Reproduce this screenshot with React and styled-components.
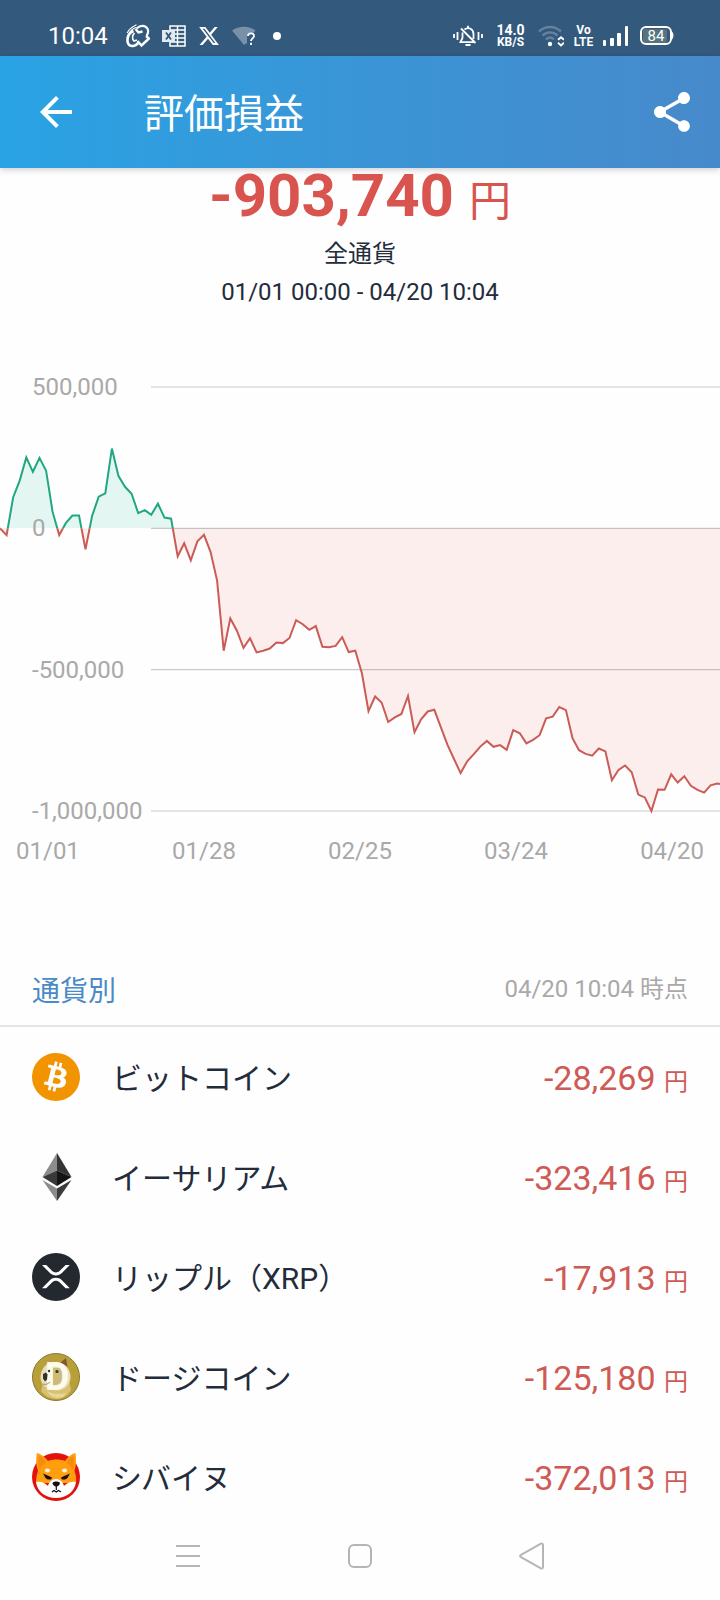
import styled, { createGlobalStyle } from "styled-components";
import { MdArrowBack, MdShare } from "react-icons/md";
import { FaXTwitter } from "react-icons/fa6";
import { SiBitcoin } from "react-icons/si";

const GlobalStyle = createGlobalStyle`
  * {
    box-sizing: border-box;
  }

  body {
    margin: 0;
    background-color: #fefefe;
    color: #232c3b;
    font-family: Roboto, "Noto Sans CJK JP", sans-serif;
  }
`;

const StatusBar = styled.div`
  display: flex;
  justify-content: space-between;
  align-items: center;
  height: 56px;
  padding: 16px 46px 0 48px;
  background-color: #33597d;
  color: #fff;
`;

const StatusGroup = styled.div`
  display: flex;
  align-items: center;
  gap: 12px;
`;

const Clock = styled.span`
  margin-right: 6px;
  font-size: 24px;
  line-height: 28px;
`;

const Stack = styled.span`
  display: flex;
  flex-direction: column;
  align-items: center;
  width: ${({ $width }) => $width}px;
  font-weight: 700;
`;

const StackText = styled.span`
  font-size: ${({ $size }) => $size}px;
  line-height: 12px;
`;

const AppBar = styled.header`
  position: relative;
  display: flex;
  align-items: center;
  height: 112px;
  padding: 0 24px 0 32px;
  background: linear-gradient(90deg, #29a3e4, #3a95d6 50%, #478acb);
  color: #fff;
  box-shadow: 0 2px 6px rgba(0, 0, 0, 0.18);
`;

const IconButton = styled.button`
  display: flex;
  padding: 0;
  border: 0;
  background: none;
  color: inherit;
  cursor: pointer;
`;

const Title = styled.h1`
  flex: 1;
  margin: 0 0 0 64px;
  padding-top: 6px;
  font-size: 40px;
  line-height: 56px;
  font-weight: 400;
`;

const Summary = styled.section`
  padding-bottom: 62px;
  text-align: center;
`;

const Total = styled.p`
  margin: 0 0 5px;
  color: #d9544f;
  font-size: 60px;
  line-height: 56px;
  font-weight: 700;
`;

const TotalUnit = styled.span`
  font-size: 42px;
  line-height: 56px;
  font-weight: 400;
`;

const SummaryText = styled.p`
  margin: 0;
  font-size: 24px;
  line-height: 38px;
`;

const Plot = styled.div`
  display: grid;
  height: 452px;

  & > * {
    grid-area: 1 / 1;
  }
`;

const PlotSvg = styled.svg`
  display: block;
  width: 100%;
  height: 452px;
`;

const AxisY = styled.div`
  display: flex;
  flex-direction: column;
  justify-content: space-between;
  padding-left: 32px;
  color: #a9a9a9;
  font-size: 24px;
  line-height: 28px;
`;

const AxisX = styled.div`
  display: flex;
  justify-content: space-between;
  padding: 12px 16px 0;
  color: #a9a9a9;
  font-size: 24px;
  line-height: 28px;
`;

const ListHeader = styled.div`
  display: flex;
  justify-content: space-between;
  align-items: center;
  height: 75px;
  margin-top: 87px;
  padding: 0 32px;
  border-bottom: 2px solid #e4e4e4;
`;

const ListTitle = styled.h2`
  margin: 0;
  padding-top: 6px;
  color: #4a8ac6;
  font-size: 28px;
  line-height: 40px;
  font-weight: 400;
`;

const ListDate = styled.span`
  color: #a9a9a9;
  font-size: 24px;
  line-height: 40px;
`;

const CoinList = styled.ul`
  margin: 0;
  padding: 0;
  list-style: none;
`;

const CoinRow = styled.li`
  display: flex;
  align-items: center;
  height: 100px;
  padding: 0 32px;
`;

const CoinIcon = styled.span`
  display: flex;
  width: 48px;
  height: 48px;
  color: ${({ $color }) => $color || "inherit"};
`;

const CoinName = styled.span`
  flex: 1;
  margin-left: 32px;
  padding-top: 4px;
  font-size: 30px;
  line-height: 44px;
`;

const Amount = styled.span`
  padding-top: 6px;
  color: #cf5a55;
  font-size: 34px;
  line-height: 44px;
`;

const Unit = styled.span`
  font-size: 24px;
`;

const NavBar = styled.nav`
  display: flex;
  padding: 15px 102px 30px;
`;

const NavButton = styled(IconButton)`
  flex: 1;
  justify-content: center;
  color: #b5b5b5;
`;

// thousands of yen, one value per day from 01/01
const history = [
  0, -24, 110, 169, 251, 200, 249, 204, 58, -24, 18, 45, 45, -74, 44, 112, 124,
  282, 186, 147, 122, 54, 64, 48, 87, 38, 34, -99, -53, -113, -46, -23, -84,
  -185, -433, -319, -362, -423, -389, -439, -433, -425, -404, -406, -388, -325,
  -339, -359, -346, -419, -421, -416, -385, -438, -433, -513, -647, -595, -616,
  -685, -669, -657, -593, -721, -676, -648, -642, -704, -765, -816, -866, -824,
  -799, -772, -752, -773, -767, -784, -714, -725, -761, -748, -732, -672, -666,
  -632, -643, -742, -785, -798, -804, -779, -789, -891, -855, -839, -863, -942,
  -952, -1000, -924, -925, -870, -899, -877, -911, -925, -935, -909, -903, -904,
];

const DAY = 6.58;
const toY = (value) => 14 + ((500 - value) / 1500) * 424;
const ZERO = toY(0);

const line = history
  .map((value, i) => `${Math.min(i * DAY, 720).toFixed(1)},${toY(value).toFixed(1)}`)
  .join(" ");
const area = `0,${ZERO} ${line} 720,${ZERO}`;

function Chart() {
  return (
    <section>
      <Plot>
        <PlotSvg viewBox="0 0 720 452" preserveAspectRatio="none" aria-hidden="true">
          <clipPath id="gain">
            <rect x="0" y="0" width="720" height={ZERO} />
          </clipPath>
          <clipPath id="loss">
            <rect x="0" y={ZERO} width="720" height={452 - ZERO} />
          </clipPath>
          <path d="M151 14H720M151 438H720" stroke="#e4e4e4" strokeWidth="2" />
          <path d={`M151 ${ZERO}H720M151 ${toY(-500)}H720`} stroke="#cacaca" strokeWidth="1.4" />
          <g clipPath="url(#gain)">
            <polygon points={area} fill="#10b890" fillOpacity="0.11" />
            <polyline points={line} fill="none" stroke="#20a781" strokeWidth="2" />
          </g>
          <g clipPath="url(#loss)">
            <polygon points={area} fill="#ec4a40" fillOpacity="0.09" />
            <polyline points={line} fill="none" stroke="#cb5b56" strokeWidth="2" />
          </g>
        </PlotSvg>
        <AxisY>
          <span>500,000</span>
          <span>0</span>
          <span>-500,000</span>
          <span>-1,000,000</span>
        </AxisY>
      </Plot>
      <AxisX>
        <span>01/01</span>
        <span>01/28</span>
        <span>02/25</span>
        <span>03/24</span>
        <span>04/20</span>
      </AxisX>
    </section>
  );
}

function SyncIcon() {
  return (
    <svg width="24" height="24" viewBox="0 0 24 24" fill="none" stroke="#fff">
      <path d="M1.2 9C3 4.5 7 2.5 10.5 0.8M3 9.5C4.5 6.5 7 4.5 10 3.5" strokeWidth="1.2" />
      <path d="M7.5 7C4 8.500 1.500 12 1.500 16c-.3 4 2 6.500 5.500 6 3-.4 4.500-2 5.500-3.500" strokeWidth="2.600" />
      <path d="M8.500 9C6 11.500 6 15 8 17l3-1" strokeWidth="1.600" />
      <path d="M10.500 4.500c3-2.500 7-3 9.500-1.500s3 5.500.5 9" strokeWidth="2.200" />
      <path d="M9.500 5l3 3.500 4-1M11.500 17l4 4.500L23 14.500l-3-2.500" strokeWidth="2.400" />
    </svg>
  );
}

function ExcelIcon() {
  return (
    <svg width="24" height="24" viewBox="0 0 24 24">
      <path d="M8 2h15v20H8z M8 6h15M8 10h15M8 14h15M8 18h15M15.500 2v20" fill="none" stroke="#fff" strokeWidth="1.500" />
      <rect x="0" y="6" width="13" height="12" fill="#e3e9ef" />
      <path d="M4 8.500l5 7M9 8.500l-5 7" stroke="#33597d" strokeWidth="1.800" />
    </svg>
  );
}

function WifiUnknownIcon() {
  return (
    <svg width="24" height="24" viewBox="0 0 24 24">
      <path d="M0 6.500C7 1.500 17 1.500 23.500 6.500L20.500 10c-3-1.500-5.500 0-5.500 3v6L12 21z" fill="#7890a8" />
      <path
        d="M16 12c0-3.500 6-3.500 6-.2 0 2.500-3 2.700-3 5.200M19 18.800v2.200"
        fill="none"
        stroke="#fff"
        strokeWidth="1.800"
      />
    </svg>
  );
}

function DotIcon() {
  return (
    <svg width="18" height="24" viewBox="0 0 18 24">
      <circle cx="9" cy="12" r="4" fill="#fff" />
    </svg>
  );
}

function MutedIcon() {
  return (
    <svg width="30" height="24" viewBox="0 0 30 24" fill="none" stroke="#fff" strokeWidth="1.800">
      <path d="M1 10v4M4.500 8v8M25.500 8v8M29 10v4" />
      <path d="M11.500 5.500c4-3 9-.5 9 4.500v5M9.500 8.500V14l-2 4.200h13.500M8 4.500L22.500 19M15 1.800v1.700" />
      <path d="M12.500 21h5" strokeWidth="2" />
    </svg>
  );
}

function WifiIcon() {
  return (
    <svg width="26" height="24" viewBox="0 0 26 24" fill="none">
      <path d="M1 7.500C7.500 1.500 16.500 1.500 23 7.500" stroke="#64829f" strokeWidth="2.400" />
      <path d="M4.500 11.500c4.500-4.200 10.500-4.200 15 0" stroke="#64829f" strokeWidth="2.400" />
      <path d="M8 15.500c2.500-2.500 5.500-2.500 8 0" stroke="#64829f" strokeWidth="2.400" />
      <circle cx="12" cy="20" r="2.200" fill="#fff" />
      <path d="M20 15.800l3-2.600 3 2.600M20 18.800l3 2.600 3-2.600" stroke="#fff" strokeWidth="2" />
    </svg>
  );
}

function SignalIcon() {
  return (
    <svg width="25" height="24" viewBox="0 0 25 24" fill="#fff">
      <rect x="0" y="16" width="3" height="6" rx="1" />
      <rect x="7" y="14" width="4" height="8" rx="1" />
      <rect x="14" y="9" width="4" height="13" rx="1" />
      <rect x="22" y="2" width="3" height="20" rx="1" />
    </svg>
  );
}

function BatteryIcon() {
  return (
    <svg width="34" height="24" viewBox="0 0 34 24">
      <rect x="3" y="5" width="24" height="14" rx="2" fill="#58737d" />
      <rect x="1" y="3" width="30" height="17" rx="5" fill="none" stroke="#fff" strokeWidth="2" />
      <path d="M31.500 7c2.600 2 2.600 7 0 9z" fill="#fff" />
      <text x="16" y="17" textAnchor="middle" fontSize="15" fill="#fff">
        84
      </text>
    </svg>
  );
}

function BitcoinIcon() {
  return (
    <CoinIcon $color="#f29400">
      <SiBitcoin size={48} />
    </CoinIcon>
  );
}

function EthereumIcon() {
  return (
    <CoinIcon>
      <svg width="48" height="48" viewBox="0 0 48 48">
        <path d="M25 0v17.500L10.500 24z" fill="#8c8c8c" />
        <path d="M25 0v17.500L39.500 24z" fill="#343434" />
        <path d="M25 17.500V33L10.500 24z" fill="#393939" />
        <path d="M25 17.500V33l14.500-9z" fill="#161313" />
        <path d="M10.500 27L25 35.500V48z" fill="#8c8c8c" />
        <path d="M39.500 27L25 35.500V48z" fill="#3c3c3b" />
      </svg>
    </CoinIcon>
  );
}

function XrpIcon() {
  return (
    <CoinIcon>
      <svg width="48" height="48" viewBox="0 0 48 48">
        <circle cx="24" cy="24" r="24" fill="#23292f" />
        <g fill="#fff">
          <path d="M10 12h4.200l5.800 5.800c2.200 2.200 5.600 2.200 7.800 0L33.600 12h4.200l-7.900 8c-3.300 3.200-8.700 3.200-12 0z" />
          <path d="M10 35.200h4.200l5.800-5.800c2.200-2.200 5.600-2.200 7.800 0l5.800 5.800h4.200l-7.900-8c-3.300-3.200-8.700-3.200-12 0z" />
        </g>
      </svg>
    </CoinIcon>
  );
}

function DogeIcon() {
  return (
    <CoinIcon>
      <svg width="48" height="48" viewBox="0 0 48 48">
        <circle cx="24" cy="24" r="23.500" fill="#b99f38" stroke="#8b7735" />
        <path d="M16 11l1-7 4 7z" fill="#c98f4c" />
        <path d="M28 10l6-5 1.500 9z" fill="#7d5934" />
        <path d="M11 30l-2 8c4 5 9 8 16 8 7-.5 11-4 14-9l-2-10-6 4z" fill="#d9c173" />
        <path d="M15 38c5 3 12 4 19 2l-3 4c-7 2-13 0-16-6z" fill="#e8d799" />
        <path
          d="M12 14c3-4 7-5 12-5 7 0 12 4 14 11 2 8-2 15-10 17-7 1-14-1-18-7-3-5-1-12 2-16z"
          fill="#e9dfbd"
        />
        <path d="M21 15h6c4 2 5 6 4 11-1 4-4 6-10 6z" fill="#cdbb78" />
        <text
          x="25"
          y="37"
          textAnchor="middle"
          fontSize="38"
          fontWeight="700"
          fill="#fffdf0"
          fillOpacity="0.95"
        >
          D
        </text>
        <path d="M11 21l3-1.500 1.500 2-.5 5-2 2-2-3z" fill="#35312a" />
        <circle cx="17" cy="18" r="1.200" fill="#3c352a" />
        <circle cx="25" cy="18.500" r="1.600" fill="#3c352a" />
        <path d="M11 31c3 1 5 0 7-2" stroke="#a79360" fill="none" />
      </svg>
    </CoinIcon>
  );
}

function ShibaIcon() {
  return (
    <CoinIcon>
      <svg width="48" height="48" viewBox="0 0 48 48">
        <circle cx="24" cy="24" r="24" fill="#e3120f" />
        <path
          d="M5 0c4 1 8 4 11 8 5-2 12-2 17 0 3-4 6-7 10.500-8 1 7 .5 13-1 18 1.500 4 2 8 1.500 12H4c0-4 .5-8 2-12C4 12 3.500 6 5 0z"
          fill="#ff9f0e"
        />
        <path d="M7 3c3 1 6 4 7 7-3 1-5 4-6.500 7C6 12 6 7 7 3zM41.500 3c-3 1-6 4-7 7 3 1 5 4 6.500 7 1.300-5 1.500-10 .5-14z" fill="#f98a10" />
        <path
          d="M4 29c5-1 9 1 12 4 1-4 4-7 8-7s7 3 8 7c3-3 7-5 12-4-1 9-9 16-20 16S5 38 4 29z"
          fill="#fff"
        />
        <ellipse cx="15.500" cy="17.500" rx="2.600" ry="2" fill="#fff3dc" />
        <ellipse cx="32.500" cy="17.500" rx="2.600" ry="2" fill="#fff3dc" />
        <path d="M11 20.500l9 4-1 2c-3 .5-5.500-.5-6.500-3.500zM38 20.500l-9 4 1 2c3 .5 5.500-.5 6.500-3.500z" fill="#161213" />
        <path d="M20.500 30c1-2 6.500-2 7.500 0-.3 2-2 3.500-3.700 3.800C22.500 33.500 20.800 32 20.500 30z" fill="#161213" />
        <path d="M24.300 33v4M20 39l2-1.500 2.300 1.500 2.300-1.500 2.400 1.500" fill="none" stroke="#161213" strokeWidth="1.200" />
      </svg>
    </CoinIcon>
  );
}

const coins = [
  { name: "ビットコイン", amount: "-28,269", Icon: BitcoinIcon },
  { name: "イーサリアム", amount: "-323,416", Icon: EthereumIcon },
  { name: "リップル（XRP）", amount: "-17,913", Icon: XrpIcon },
  { name: "ドージコイン", amount: "-125,180", Icon: DogeIcon },
  { name: "シバイヌ", amount: "-372,013", Icon: ShibaIcon },
];

function App() {
  return (
    <>
      <GlobalStyle />
      <StatusBar>
        <StatusGroup>
          <Clock>10:04</Clock>
          <SyncIcon />
          <ExcelIcon />
          <FaXTwitter size={22} />
          <WifiUnknownIcon />
          <DotIcon />
        </StatusGroup>
        <StatusGroup>
          <MutedIcon />
          <Stack $width={31}>
            <StackText $size={14}>14.0</StackText>
            <StackText $size={12}>KB/S</StackText>
          </Stack>
          <WifiIcon />
          <Stack $width={15}>
            <StackText $size={12}>Vo</StackText>
            <StackText $size={12}>LTE</StackText>
          </Stack>
          <SignalIcon />
          <BatteryIcon />
        </StatusGroup>
      </StatusBar>
      <AppBar>
        <IconButton type="button" aria-label="戻る">
          <MdArrowBack size={48} />
        </IconButton>
        <Title>評価損益</Title>
        <IconButton type="button" aria-label="共有">
          <MdShare size={48} />
        </IconButton>
      </AppBar>
      <main>
        <Summary>
          <Total>
            -903,740 <TotalUnit>円</TotalUnit>
          </Total>
          <SummaryText>全通貨</SummaryText>
          <SummaryText>01/01 00:00 - 04/20 10:04</SummaryText>
        </Summary>
        <Chart />
        <ListHeader>
          <ListTitle>通貨別</ListTitle>
          <ListDate>04/20 10:04 時点</ListDate>
        </ListHeader>
        <CoinList>
          {coins.map(({ name, amount, Icon }) => (
            <CoinRow key={name}>
              <Icon />
              <CoinName>{name}</CoinName>
              <Amount>
                {amount} <Unit>円</Unit>
              </Amount>
            </CoinRow>
          ))}
        </CoinList>
      </main>
      <NavBar>
        <NavButton type="button" aria-label="メニュー">
          <svg width="28" height="28" viewBox="0 0 28 28" stroke="currentColor" strokeWidth="2">
            <path d="M2 4h24M2 14h24M2 24h24" />
          </svg>
        </NavButton>
        <NavButton type="button" aria-label="ホーム">
          <svg width="28" height="28" viewBox="0 0 28 28" fill="none" stroke="currentColor" strokeWidth="2">
            <rect x="3" y="3" width="22" height="22" rx="5" />
          </svg>
        </NavButton>
        <NavButton type="button" aria-label="前へ">
          <svg width="28" height="28" viewBox="0 0 28 28" fill="none" stroke="currentColor" strokeWidth="2">
            <path d="M22.500 1.800C24 1 25 1.500 25 3v22c0 1.500-1 2-2.500 1.200L3 15.200c-1.300-.8-1.300-1.600 0-2.400z" />
          </svg>
        </NavButton>
      </NavBar>
    </>
  );
}

export default App;
